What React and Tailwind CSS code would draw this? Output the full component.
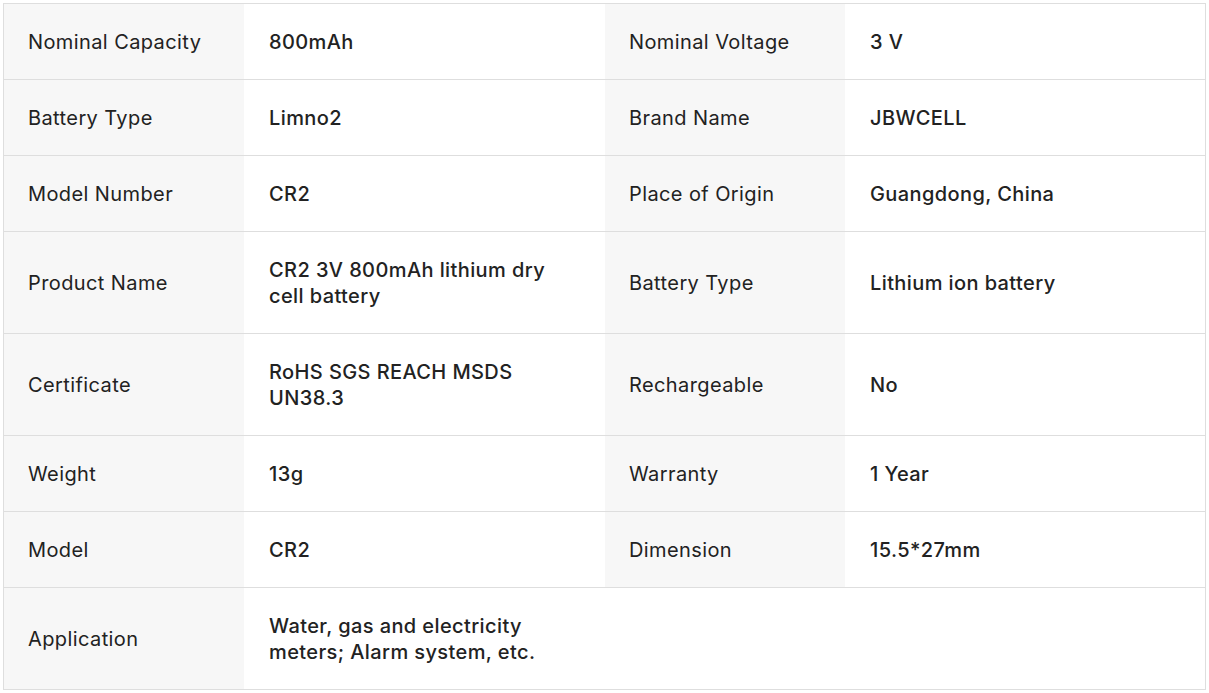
import React from "react";

const rows = [
  ["Nominal Capacity", "800mAh", "Nominal Voltage", "3 V"],
  ["Battery Type", "Limno2", "Brand Name", "JBWCELL"],
  ["Model Number", "CR2", "Place of Origin", "Guangdong, China"],
  ["Product Name", "CR2 3V 800mAh lithium dry cell battery", "Battery Type", "Lithium ion battery"],
  ["Certificate", "RoHS SGS REACH MSDS UN38.3", "Rechargeable", "No"],
  ["Weight", "13g", "Warranty", "1 Year"],
  ["Model", "CR2", "Dimension", "15.5*27mm"],
];

function Label({ children }) {
  return (
    <div className="bg-[#f7f7f7] pl-[24px] pr-[25px] py-[24.5px] flex items-center text-[20px] leading-[26px] tracking-[0.4px] text-[#222]">
      {children}
    </div>
  );
}

function Value({ children, wide }) {
  return (
    <div className={"bg-white px-[25px] py-[24.5px] flex items-center text-[20px] leading-[26px] tracking-[0.4px] font-medium text-[#222] " + (wide ? "col-span-3" : "")}>
      <div className="max-w-[305px]">{children}</div>
    </div>
  );
}

export default function App() {
  return (
    <div className="bg-white p-[3px] w-[1209px] h-[693px]" style={{ fontFamily: "Inter, 'Noto Sans', sans-serif" }}>
      <div className="border border-[#dedede]">
        {rows.map((r, i) => (
          <div key={i} className="grid grid-cols-[240px_361px_240px_1fr] border-b border-[#dedede]">
            <Label>{r[0]}</Label>
            <Value>{r[1]}</Value>
            <Label>{r[2]}</Label>
            <Value>{r[3]}</Value>
          </div>
        ))}
        <div className="grid grid-cols-[240px_361px_240px_1fr]">
          <Label>Application</Label>
          <Value wide>Water, gas and electricity meters; Alarm system, etc.</Value>
        </div>
      </div>
    </div>
  );
}
